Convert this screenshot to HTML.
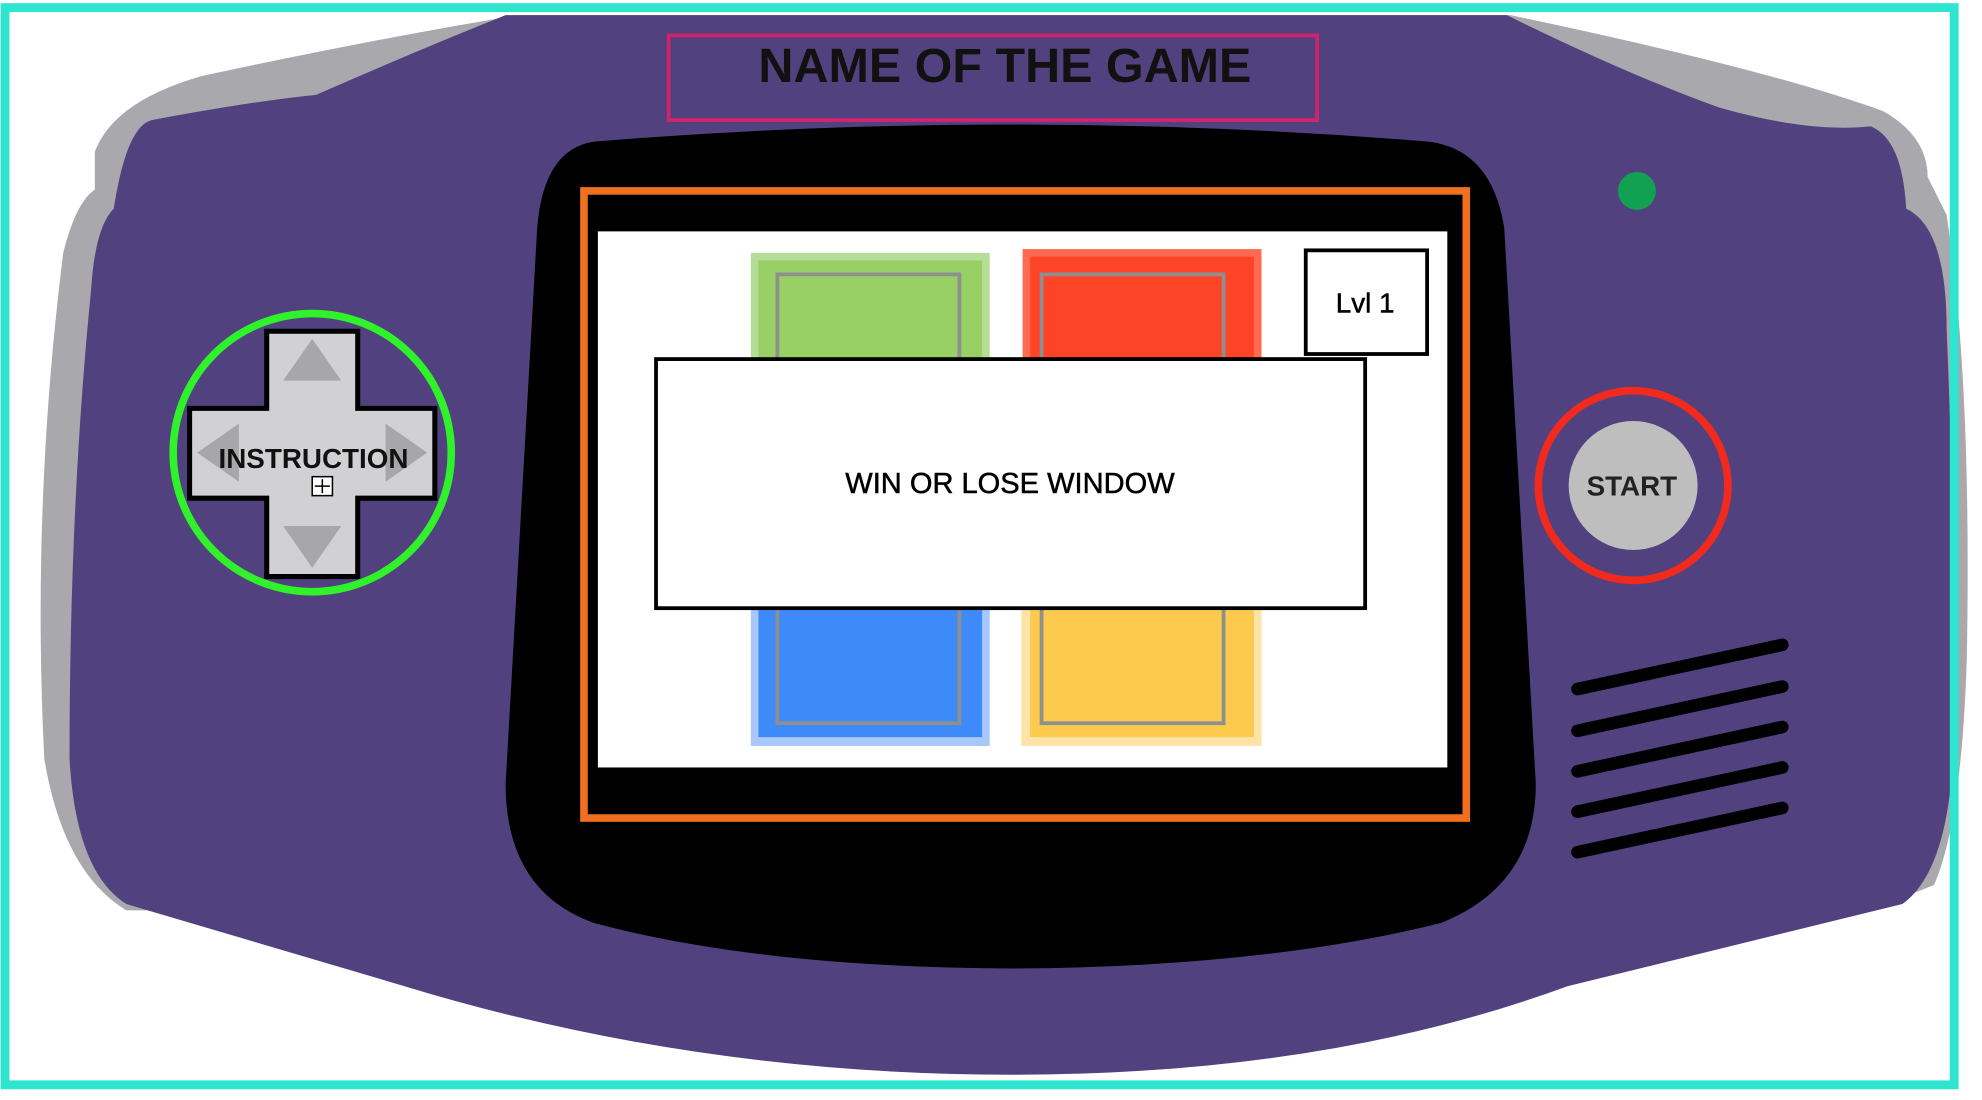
<!DOCTYPE html>
<html><head><meta charset="utf-8"><style>
html,body{margin:0;padding:0;background:#fff;}
svg{display:block;}
text{font-family:"Liberation Sans",Arial,sans-serif;font-weight:bold;}
</style></head><body>
<svg width="1982" height="1100" viewBox="0 0 1568 870" preserveAspectRatio="none" xmlns="http://www.w3.org/2000/svg">
<rect x="0" y="0" width="1568" height="870" fill="#fff"/>
<!-- gray shell -->
<path d="M410 12 L1195 12 Q1400 55 1490 88 Q1525 108 1525 140 L1540 170 Q1560 300 1556 520 Q1552 650 1530 700 L1480 720 L100 720 Q50 690 35 600 Q25 400 50 200 Q60 160 75 150 L75 120 Q90 80 160 60 Q300 30 410 12 Z" fill="#a9a9ad"/>
<!-- purple body -->
<path d="M400 12 L1192 12 Q1290 60 1360 85 Q1430 105 1480 100 Q1505 110 1508 165 Q1540 180 1540 260 Q1548 450 1545 600 Q1540 690 1505 715 L1240 780 Q1050 850 800 850 Q550 850 320 780 L100 715 Q60 690 55 600 Q55 400 72 230 Q75 180 90 165 Q100 100 120 95 Q200 80 250 75 Q330 40 400 12 Z" fill="#51427f"/>
<!-- black bezel -->
<path d="M470 112 Q800 85 1130 112 Q1180 118 1190 180 L1215 620 Q1215 700 1140 730 Q1000 765 800 766 Q600 765 470 730 Q400 705 400 620 L425 180 Q430 118 470 112 Z" fill="#000"/>
<!-- title -->
<rect x="529" y="28" width="513" height="67" fill="none" stroke="#d0236e" stroke-width="3"/>
<text x="795" y="65" font-size="38" text-anchor="middle" fill="#111" textLength="390" lengthAdjust="spacingAndGlyphs">NAME OF THE GAME</text>
<!-- orange frame -->
<rect x="462" y="151" width="698" height="496" fill="none" stroke="#f07020" stroke-width="6"/>
<rect x="473" y="183" width="672" height="424" fill="#fff"/>
<!-- squares -->
<rect x="594" y="200" width="189" height="90" fill="#b6dd98"/>
<rect x="600" y="206" width="177" height="84" fill="#99d066"/>
<rect x="615" y="217" width="144" height="73" fill="none" stroke="#8f8f8f" stroke-width="3"/>
<rect x="809" y="197" width="189" height="93" fill="#ff6a50"/>
<rect x="815" y="203" width="177" height="87" fill="#fd4426"/>
<rect x="824" y="217" width="144" height="73" fill="none" stroke="#8f8f8f" stroke-width="3"/>
<rect x="594" y="475" width="189" height="115" fill="#a8c8fc"/>
<rect x="600" y="475" width="177" height="108" fill="#3f8af9"/>
<rect x="615" y="475" width="144" height="97" fill="none" stroke="#8f8f8f" stroke-width="3"/>
<rect x="808" y="475" width="190" height="115" fill="#fde3a8"/>
<rect x="815" y="475" width="177" height="108" fill="#fdca4e"/>
<rect x="824" y="475" width="144" height="97" fill="none" stroke="#8f8f8f" stroke-width="3"/>
<!-- lvl -->
<rect x="1033" y="198" width="96" height="82" fill="#fff" stroke="#000" stroke-width="3"/>
<text x="1080" y="247" font-size="22" text-anchor="middle" fill="#000" style="font-weight:normal" stroke="#000" stroke-width="0.4">Lvl 1</text>
<!-- win window -->
<rect x="519" y="284" width="561" height="197" fill="#fff" stroke="#000" stroke-width="3"/>
<text x="799" y="390" font-size="23" text-anchor="middle" fill="#000" style="font-weight:normal" stroke="#000" stroke-width="0.4">WIN OR LOSE WINDOW</text>
<!-- dpad -->
<path d="M211 262 H283 V323 H344 V394 H283 V456 H211 V394 H150 V323 H211 Z" fill="#d1d1d3" stroke="#000" stroke-width="4"/>
<polygon points="247,268 270,301 224,301" fill="#a7a7a9"/>
<polygon points="247,449 270,416 224,416" fill="#a7a7a9"/>
<polygon points="156,358 189,335 189,381" fill="#a7a7a9"/>
<polygon points="338,358 305,335 305,381" fill="#a7a7a9"/>
<circle cx="247" cy="358" r="110" fill="none" stroke="#2ff22a" stroke-width="6"/>
<text x="248" y="370" font-size="22" text-anchor="middle" fill="#111">INSTRUCTION</text>
<rect x="247" y="377" width="16" height="15" fill="#fff" stroke="#000" stroke-width="1.2"/>
<path d="M255 379 V390 M249 384.5 H261" stroke="#000" stroke-width="1.2"/>
<!-- led -->
<circle cx="1295" cy="151" r="15" fill="#12a152"/>
<!-- start -->
<circle cx="1292" cy="384" r="51" fill="#bebebe"/>
<circle cx="1292" cy="384" r="75" fill="none" stroke="#f22a1e" stroke-width="6"/>
<text x="1291" y="392" font-size="22" text-anchor="middle" fill="#222">START</text>
<!-- speaker -->
<g stroke="#000" stroke-width="10" stroke-linecap="round">
<line x1="1248" y1="545" x2="1410" y2="510"/>
<line x1="1248" y1="578" x2="1410" y2="543"/>
<line x1="1248" y1="610" x2="1410" y2="575"/>
<line x1="1248" y1="642" x2="1410" y2="607"/>
<line x1="1248" y1="674" x2="1410" y2="639"/>
</g>
<!-- teal frame -->
<rect x="4" y="6" width="1542" height="852" fill="none" stroke="#2ee6d0" stroke-width="7"/>
</svg>
</body></html>
